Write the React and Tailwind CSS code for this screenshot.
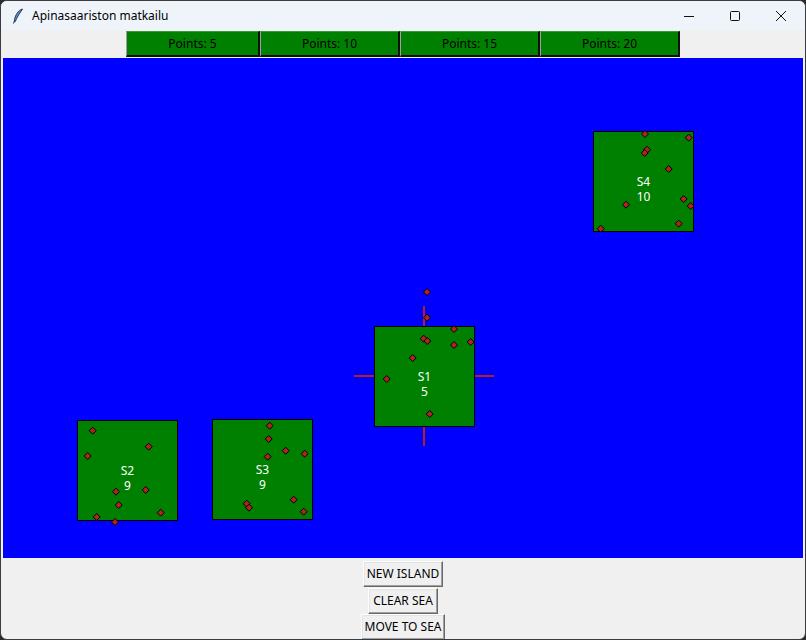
import React from "react";

const islands = [
  { name: "S4", pts: "10", left: 590, top: 73 },
  { name: "S1", pts: "5", left: 371, top: 268 },
  { name: "S2", pts: "9", left: 74, top: 362 },
  { name: "S3", pts: "9", left: 209, top: 361 },
];

const dots = [
  [642, 76], [685.7, 79.7], [644, 91.7], [641.7, 95], [665.7, 111], [680.7, 141], [687.7, 148], [623, 146.7], [675.7, 165.7], [597.7, 170.7],
  [424, 234], [424, 259.7], [451, 271], [420.7, 280.7], [424.3, 283], [467.7, 284], [451, 287], [409.7, 300], [383.7, 321], [426.7, 356],
  [89.7, 372.7], [145.7, 388.7], [84.7, 398], [113, 433.7], [142.7, 432], [115.7, 447], [157.7, 454.7], [93.7, 459], [112, 464],
  [266.7, 367.7], [265.7, 381], [282.7, 392.7], [301.7, 395.7], [264.7, 398.7], [243.7, 445.7], [246, 449.7], [290.7, 441.7], [300.7, 453.7],
];

const cells = [
  { label: "Points: 5", w: "w-[134px]" },
  { label: "Points: 10", w: "w-[140px]" },
  { label: "Points: 15", w: "w-[140px]" },
  { label: "Points: 20", w: "w-[140px]" },
];

function Btn({ children, w, mt }) {
  return (
    <button
      className={`${w} ${mt} h-[26px] bg-[#f0f0f0] text-[12px] text-black border border-t-white border-l-white border-r-[#696969] border-b-[#696969] shadow-[inset_-1px_-1px_0_#a0a0a0,inset_1px_1px_0_#e3e3e3] flex items-center justify-center leading-none`}
    >
      {children}
    </button>
  );
}

export default function App() {
  return (
    <div className="w-[806px] h-[640px] bg-[#2b2b2b]" style={{ fontFamily: '"Noto Sans", "Open Sans", sans-serif' }}>
      <div className="w-[806px] h-[640px] rounded-[7px] overflow-hidden border border-[#3c3c3c] bg-[#f0f0f0] flex flex-col">
        {/* Title bar */}
        <div className="h-[29px] bg-[#eff4fb] flex items-center shrink-0">
          <svg width="12" height="16" viewBox="0 0 12 16" className="ml-[11px]">
            <path d="M10.5 1 C6 2.5 3 7 2.2 13.5 L3.2 13.7 C5 9 8 5 10.5 1 Z" fill="#5b8fd8" stroke="#1a2a44" strokeWidth="0.9" />
            <path d="M2.2 13.5 L1.5 15.5" stroke="#1a2a44" strokeWidth="1" />
          </svg>
          <span className="ml-[8px] text-[12px] text-black">Apinasaariston matkailu</span>
          <div className="ml-auto flex items-center h-full">
            <div className="w-[46px] h-full flex items-center justify-center">
              <svg width="12" height="12" viewBox="0 0 12 12"><path d="M1 6.5 H11" stroke="#111" strokeWidth="1" /></svg>
            </div>
            <div className="w-[46px] h-full flex items-center justify-center">
              <svg width="12" height="12" viewBox="0 0 12 12"><rect x="1.5" y="1.5" width="9" height="9" rx="1" fill="none" stroke="#111" strokeWidth="1" /></svg>
            </div>
            <div className="w-[46px] h-full flex items-center justify-center mr-[1px]">
              <svg width="12" height="12" viewBox="0 0 12 12"><path d="M1 1 L11 11 M11 1 L1 11" stroke="#111" strokeWidth="1" /></svg>
            </div>
          </div>
        </div>

        {/* Points bar */}
        <div className="flex justify-center mt-[1px] shrink-0">
          {cells.map((c) => (
            <div
              key={c.label}
              className={`${c.w} h-[26px] bg-[#008000] text-black text-[12px] flex items-center justify-center border-l border-t border-l-[#a0a0a0] border-t-[#3a9a3a] border-r-2 border-b-2 border-r-[#101010] border-b-[#101010]`}
            >
              {c.label}
            </div>
          ))}
        </div>

        {/* Sea canvas */}
        <div className="mx-[2px] mt-[1px] shrink-0">
          <div className="relative w-[800px] h-[500px] bg-[#0000ff] overflow-hidden">
            <svg width="800" height="500" className="absolute left-0 top-0">
              <g stroke="#b22222" strokeWidth="2">
                <line x1="351" y1="318" x2="371" y2="318" />
                <line x1="472" y1="318" x2="491" y2="318" />
                <line x1="421" y1="248" x2="421" y2="268" />
                <line x1="421" y1="369" x2="421" y2="388" />
              </g>
            </svg>
            {islands.map((s) => (
              <div
                key={s.name}
                className="absolute w-[101px] h-[101px] bg-[#008000] border border-black"
                style={{ left: s.left, top: s.top }}
              >
                <div className="absolute left-0 right-0 top-[42px] flex flex-col items-center text-white text-[12px] leading-[15px]">
                  <span>{s.name}</span>
                  <span>{s.pts}</span>
                </div>
              </div>
            ))}
            <svg width="800" height="500" className="absolute left-0 top-0">
              {dots.map(([x, y], i) => (
                <polygon
                  key={i}
                  points={`${x},${y - 3.5} ${x + 3.5},${y} ${x},${y + 3.5} ${x - 3.5},${y}`}
                  fill="#b22222"
                  stroke="#000"
                  strokeWidth="1"
                />
              ))}
            </svg>
          </div>
        </div>

        {/* Buttons */}
        <div className="flex flex-col items-center">
          <Btn w="w-[80px]" mt="mt-[3px]">NEW ISLAND</Btn>
          <Btn w="w-[70px]" mt="mt-[1px]">CLEAR SEA</Btn>
          <Btn w="w-[84px]" mt="mt-0">MOVE TO SEA</Btn>
        </div>
      </div>
    </div>
  );
}
